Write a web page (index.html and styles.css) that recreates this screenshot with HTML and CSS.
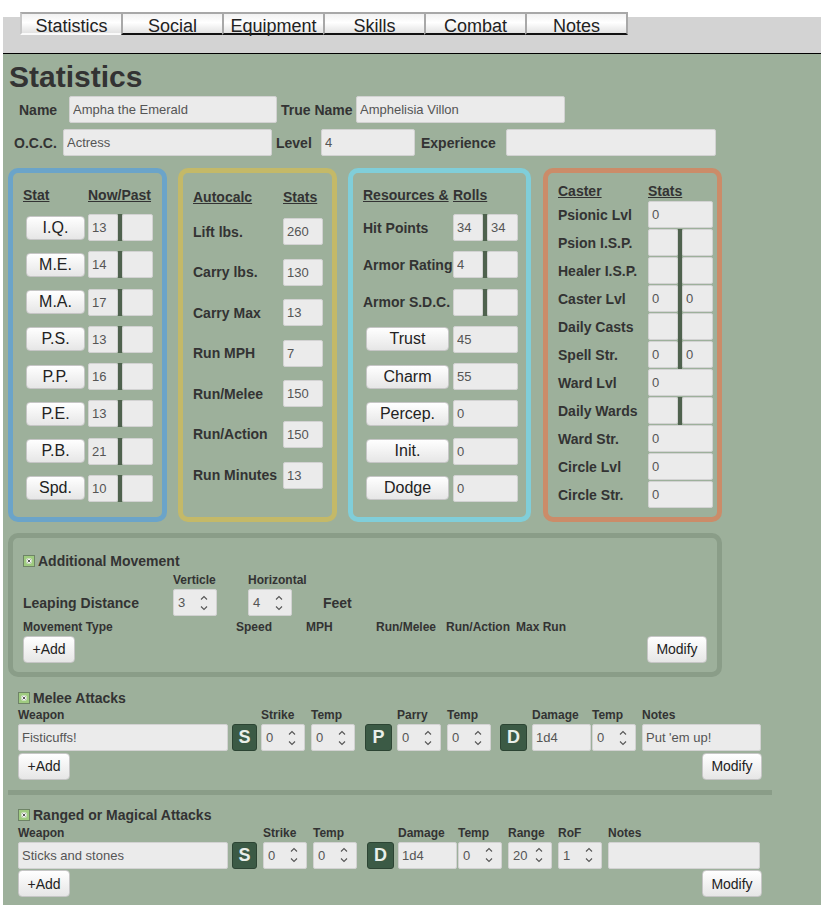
FILE: index.html
```html
<!DOCTYPE html>
<html>
<head>
<meta charset="utf-8">
<title>Statistics</title>
<link rel="stylesheet" href="styles.css">
</head>
<body>
<div class="topbar">
  <div class="tabs">
    <div class="tab active">Statistics</div>
    <div class="tab">Social</div>
    <div class="tab">Equipment</div>
    <div class="tab">Skills</div>
    <div class="tab">Combat</div>
    <div class="tab last">Notes</div>
  </div>
</div>
<div class="sheet">
  <h1>Statistics</h1>
  <div class="frow r1">
    <span class="flbl l-name">Name</span><input class="inp w208" value="Ampha the Emerald">
    <span class="flbl l-true">True Name</span><input class="inp w209" value="Amphelisia Villon">
  </div>
  <div class="frow r2">
    <span class="flbl l-occ">O.C.C.</span><input class="inp w209" value="Actress">
    <span class="flbl l-lvl">Level</span><input class="inp w94" value="4">
    <span class="flbl l-exp">Experience</span><input class="inp w210" value="">
  </div>

  <div class="boxes">
    <div class="box b-stat">
      <div class="hgrid">
        <span class="hdr">Stat</span><span class="hdr">Now/Past</span>
      </div>
      <div class="grid">
        <button class="btn sbtn">I.Q.</button><div class="pair"><input class="inp" value="13"><span class="bar"></span><input class="inp" value=""></div>
        <button class="btn sbtn">M.E.</button><div class="pair"><input class="inp" value="14"><span class="bar"></span><input class="inp" value=""></div>
        <button class="btn sbtn">M.A.</button><div class="pair"><input class="inp" value="17"><span class="bar"></span><input class="inp" value=""></div>
        <button class="btn sbtn">P.S.</button><div class="pair"><input class="inp" value="13"><span class="bar"></span><input class="inp" value=""></div>
        <button class="btn sbtn">P.P.</button><div class="pair"><input class="inp" value="16"><span class="bar"></span><input class="inp" value=""></div>
        <button class="btn sbtn">P.E.</button><div class="pair"><input class="inp" value="13"><span class="bar"></span><input class="inp" value=""></div>
        <button class="btn sbtn">P.B.</button><div class="pair"><input class="inp" value="21"><span class="bar"></span><input class="inp" value=""></div>
        <button class="btn sbtn">Spd.</button><div class="pair"><input class="inp" value="10"><span class="bar"></span><input class="inp" value=""></div>
      </div>
    </div>

    <div class="box b-auto">
      <div class="hgrid">
        <span class="hdr">Autocalc</span><span class="hdr">Stats</span>
      </div>
      <div class="grid">
        <span class="blbl">Lift lbs.</span><input class="inp" value="260">
        <span class="blbl">Carry lbs.</span><input class="inp" value="130">
        <span class="blbl">Carry Max</span><input class="inp" value="13">
        <span class="blbl">Run MPH</span><input class="inp" value="7">
        <span class="blbl">Run/Melee</span><input class="inp" value="150">
        <span class="blbl">Run/Action</span><input class="inp" value="150">
        <span class="blbl">Run Minutes</span><input class="inp" value="13">
      </div>
    </div>

    <div class="box b-res">
      <div class="hgrid">
        <span class="hdr">Resources &amp;</span><span class="hdr">Rolls</span>
      </div>
      <div class="grid">
        <span class="blbl">Hit Points</span><div class="pair"><input class="inp" value="34"><span class="bar"></span><input class="inp" value="34"></div>
        <span class="blbl">Armor Rating</span><div class="pair"><input class="inp" value="4"><span class="bar"></span><input class="inp" value=""></div>
        <span class="blbl">Armor S.D.C.</span><div class="pair"><input class="inp" value=""><span class="bar"></span><input class="inp" value=""></div>
        <button class="btn sbtn">Trust</button><input class="inp" value="45">
        <button class="btn sbtn">Charm</button><input class="inp" value="55">
        <button class="btn sbtn">Percep.</button><input class="inp" value="0">
        <button class="btn sbtn">Init.</button><input class="inp" value="0">
        <button class="btn sbtn">Dodge</button><input class="inp" value="0">
      </div>
    </div>

    <div class="box b-cast">
      <div class="hgrid">
        <span class="hdr">Caster</span><span class="hdr">Stats</span>
      </div>
      <div class="grid">
        <span class="blbl">Psionic Lvl</span><input class="inp" value="0">
        <span class="blbl">Psion I.S.P.</span><div class="pair"><input class="inp" value=""><span class="bar"></span><input class="inp" value=""></div>
        <span class="blbl">Healer I.S.P.</span><div class="pair"><input class="inp" value=""><span class="bar"></span><input class="inp" value=""></div>
        <span class="blbl">Caster Lvl</span><div class="pair"><input class="inp" value="0"><span class="bar"></span><input class="inp" value="0"></div>
        <span class="blbl">Daily Casts</span><div class="pair"><input class="inp" value=""><span class="bar"></span><input class="inp" value=""></div>
        <span class="blbl">Spell Str.</span><div class="pair"><input class="inp" value="0"><span class="bar"></span><input class="inp" value="0"></div>
        <span class="blbl">Ward Lvl</span><input class="inp" value="0">
        <span class="blbl">Daily Wards</span><div class="pair"><input class="inp" value=""><span class="bar"></span><input class="inp" value=""></div>
        <span class="blbl">Ward Str.</span><input class="inp" value="0">
        <span class="blbl">Circle Lvl</span><input class="inp" value="0">
        <span class="blbl">Circle Str.</span><input class="inp" value="0">
      </div>
    </div>
  </div>

  <div class="movebox">
    <div class="sec-title"><svg class="chk" width="12" height="12" viewBox="0 0 12 12"><rect x="0.5" y="0.5" width="11" height="11" fill="#9fcb80" stroke="#3e4a3e" stroke-dasharray="1 1"/><rect x="3.5" y="3.5" width="5" height="5" rx="0.8" fill="#f4f4f4"/><path d="M4.6 4.6l2.8 2.8M7.4 4.6l-2.8 2.8" stroke="#555" stroke-width="1"/></svg>Additional Movement</div>
    <div class="leap">
      <span></span><span class="sm">Verticle</span><span class="sm">Horizontal</span><span></span>
      <span class="blbl">Leaping Distance</span>
      <div class="inp spin w44"><span>3</span><svg class="chev" width="8" height="16" viewBox="0 0 8 16"><path d="M1 4.5L4 1.5L7 4.5M1 11.5L4 14.5L7 11.5" fill="none" stroke="#555" stroke-width="1.1"/></svg></div>
      <div class="inp spin w44"><span>4</span><svg class="chev" width="8" height="16" viewBox="0 0 8 16"><path d="M1 4.5L4 1.5L7 4.5M1 11.5L4 14.5L7 11.5" fill="none" stroke="#555" stroke-width="1.1"/></svg></div>
      <span class="blbl">Feet</span>
    </div>
    <div class="mtype">
      <span>Movement Type</span><span>Speed</span><span>MPH</span><span>Run/Melee</span><span>Run/Action</span><span>Max Run</span>
    </div>
    <div class="actions">
      <button class="btn abtn add">+Add</button><button class="btn abtn mod">Modify</button>
    </div>
  </div>

  <div class="attack melee">
    <div class="sec-title"><svg class="chk" width="12" height="12" viewBox="0 0 12 12"><rect x="0.5" y="0.5" width="11" height="11" fill="#9fcb80" stroke="#3e4a3e" stroke-dasharray="1 1"/><rect x="3.5" y="3.5" width="5" height="5" rx="0.8" fill="#f4f4f4"/><path d="M4.6 4.6l2.8 2.8M7.4 4.6l-2.8 2.8" stroke="#555" stroke-width="1"/></svg>Melee Attacks</div>
    <div class="arow">
      <div class="col"><span class="clbl">Weapon</span><input class="inp w210" value="Fisticuffs!"></div>
      <div class="col ml4"><span class="clbl"></span><button class="dbtn w25">S</button></div>
      <div class="col ml4"><span class="clbl">Strike</span><div class="inp spin w44"><span>0</span><svg class="chev" width="8" height="16" viewBox="0 0 8 16"><path d="M1 4.5L4 1.5L7 4.5M1 11.5L4 14.5L7 11.5" fill="none" stroke="#555" stroke-width="1.1"/></svg></div></div>
      <div class="col ml6"><span class="clbl">Temp</span><div class="inp spin w44"><span>0</span><svg class="chev" width="8" height="16" viewBox="0 0 8 16"><path d="M1 4.5L4 1.5L7 4.5M1 11.5L4 14.5L7 11.5" fill="none" stroke="#555" stroke-width="1.1"/></svg></div></div>
      <div class="col ml10"><span class="clbl"></span><button class="dbtn w27">P</button></div>
      <div class="col ml5"><span class="clbl">Parry</span><div class="inp spin w44"><span>0</span><svg class="chev" width="8" height="16" viewBox="0 0 8 16"><path d="M1 4.5L4 1.5L7 4.5M1 11.5L4 14.5L7 11.5" fill="none" stroke="#555" stroke-width="1.1"/></svg></div></div>
      <div class="col ml6"><span class="clbl">Temp</span><div class="inp spin w44"><span>0</span><svg class="chev" width="8" height="16" viewBox="0 0 8 16"><path d="M1 4.5L4 1.5L7 4.5M1 11.5L4 14.5L7 11.5" fill="none" stroke="#555" stroke-width="1.1"/></svg></div></div>
      <div class="col ml9"><span class="clbl"></span><button class="dbtn w27">D</button></div>
      <div class="col ml5"><span class="clbl">Damage</span><input class="inp w59" value="1d4"></div>
      <div class="col ml1"><span class="clbl">Temp</span><div class="inp spin w44"><span>0</span><svg class="chev" width="8" height="16" viewBox="0 0 8 16"><path d="M1 4.5L4 1.5L7 4.5M1 11.5L4 14.5L7 11.5" fill="none" stroke="#555" stroke-width="1.1"/></svg></div></div>
      <div class="col ml6"><span class="clbl">Notes</span><input class="inp w119" value="Put 'em up!"></div>
    </div>
    <div class="actions wide">
      <button class="btn abtn add">+Add</button><button class="btn abtn mod">Modify</button>
    </div>
  </div>

  <div class="sep"></div>

  <div class="attack ranged">
    <div class="sec-title"><svg class="chk" width="12" height="12" viewBox="0 0 12 12"><rect x="0.5" y="0.5" width="11" height="11" fill="#9fcb80" stroke="#3e4a3e" stroke-dasharray="1 1"/><rect x="3.5" y="3.5" width="5" height="5" rx="0.8" fill="#f4f4f4"/><path d="M4.6 4.6l2.8 2.8M7.4 4.6l-2.8 2.8" stroke="#555" stroke-width="1"/></svg>Ranged or Magical Attacks</div>
    <div class="arow">
      <div class="col"><span class="clbl">Weapon</span><input class="inp w210" value="Sticks and stones"></div>
      <div class="col ml4"><span class="clbl"></span><button class="dbtn w25">S</button></div>
      <div class="col ml6"><span class="clbl">Strike</span><div class="inp spin w44"><span>0</span><svg class="chev" width="8" height="16" viewBox="0 0 8 16"><path d="M1 4.5L4 1.5L7 4.5M1 11.5L4 14.5L7 11.5" fill="none" stroke="#555" stroke-width="1.1"/></svg></div></div>
      <div class="col ml6"><span class="clbl">Temp</span><div class="inp spin w44"><span>0</span><svg class="chev" width="8" height="16" viewBox="0 0 8 16"><path d="M1 4.5L4 1.5L7 4.5M1 11.5L4 14.5L7 11.5" fill="none" stroke="#555" stroke-width="1.1"/></svg></div></div>
      <div class="col ml10"><span class="clbl"></span><button class="dbtn w27">D</button></div>
      <div class="col ml4"><span class="clbl">Damage</span><input class="inp w59" value="1d4"></div>
      <div class="col ml1"><span class="clbl">Temp</span><div class="inp spin w44"><span>0</span><svg class="chev" width="8" height="16" viewBox="0 0 8 16"><path d="M1 4.5L4 1.5L7 4.5M1 11.5L4 14.5L7 11.5" fill="none" stroke="#555" stroke-width="1.1"/></svg></div></div>
      <div class="col ml6"><span class="clbl">Range</span><div class="inp spin w44"><span>20</span><svg class="chev" width="8" height="16" viewBox="0 0 8 16"><path d="M1 4.5L4 1.5L7 4.5M1 11.5L4 14.5L7 11.5" fill="none" stroke="#555" stroke-width="1.1"/></svg></div></div>
      <div class="col ml6"><span class="clbl">RoF</span><div class="inp spin w44"><span>1</span><svg class="chev" width="8" height="16" viewBox="0 0 8 16"><path d="M1 4.5L4 1.5L7 4.5M1 11.5L4 14.5L7 11.5" fill="none" stroke="#555" stroke-width="1.1"/></svg></div></div>
      <div class="col ml6"><span class="clbl">Notes</span><input class="inp w152" value=""></div>
    </div>
    <div class="actions wide">
      <button class="btn abtn add">+Add</button><button class="btn abtn mod">Modify</button>
    </div>
  </div>
</div>
</body>
</html>
```

FILE: styles.css
```css
* { box-sizing: border-box; }
html, body { margin: 0; padding: 0; }
body {
  font-family: "Liberation Sans", Arial, sans-serif;
  color: #333;
  background: #fff;
  overflow: hidden;
}

/* ---------- tabs ---------- */
.topbar {
  display: flow-root;
  margin: 17px 0 0 3px;
  height: 37px;
  background: #d3d3d3;
  border-bottom: 1px solid #000;
}
.tabs {
  display: flex;
  margin: -5px 0 0 17px;
}
.tab {
  width: 101px;
  height: 23px;
  padding-top: 2px;
  border-top: 2px solid #a8a8a8;
  border-left: 2px solid #a8a8a8;
  border-bottom: 2px solid #111;
  background: linear-gradient(#f2f2f2, #ffffff 45%, #e2e2e2);
  font-size: 18px;
  line-height: 20px;
  text-align: center;
  color: #222;
}
.tab.active {
  border-bottom-color: #fafafa;
  border-left-color: #c8c8c8;
}
.tab.last {
  width: 103px;
  border-right: 2px solid #a8a8a8;
}

/* ---------- sheet ---------- */
.sheet {
  margin-left: 3px;
  padding-top: 6px;
  min-height: 851px;
  background: #9db09b;
  display: flow-root;
}
h1 {
  margin: 0 0 0 6px;
  font-size: 30px;
  line-height: 34px;
  font-weight: bold;
  color: #333;
}

.inp {
  display: block;
  height: 27px;
  margin: 0;
  padding: 0 3px;
  border: 1px solid #d2d2d2;
  border-radius: 2px;
  background: #ebebeb;
  font-family: "Liberation Sans", Arial, sans-serif;
  font-size: 13px;
  color: #555;
  outline: none;
}

.frow {
  display: flex;
  align-items: center;
  height: 27px;
}
.r1 { margin-top: 2px; }
.r2 { margin-top: 6px; }
.flbl {
  font-size: 14px;
  font-weight: bold;
  white-space: nowrap;
  color: #333;
}
.l-name { margin-left: 16px; width: 50px; }
.l-true { margin-left: 4px; width: 75px; }
.l-occ { margin-left: 11px; width: 49px; }
.l-lvl { margin-left: 4px; width: 45px; }
.l-exp { margin-left: 6px; width: 85px; }
.w208 { width: 208px; }
.w209 { width: 209px; }
.w210 { width: 210px; }
.w94 { width: 94px; }
.w59 { width: 59px; }
.w119 { width: 119px; }
.w152 { width: 152px; }
.w44 { width: 44px; }
.w25 { width: 25px; }
.w27 { width: 27px; }

/* ---------- boxes ---------- */
.boxes {
  display: flex;
  margin: 12px 0 0 5px;
  height: 354px;
}
.box {
  border: 5px solid;
  border-radius: 10px;
  padding-left: 10px;
}
.b-stat { width: 159px; border-color: #6ba4c9; padding-top: 14px; }
.b-auto { width: 159px; margin-left: 11px; border-color: #c4b968; padding-top: 16px; }
.b-res { width: 183px; margin-left: 11px; border-color: #80ced9; padding-top: 14px; }
.b-cast { width: 179px; margin-left: 12px; border-color: #cb8c69; padding-top: 10px; }

.hgrid, .grid {
  display: grid;
  align-items: center;
}
.hgrid { height: 16px; }
.hdr {
  font-size: 14px;
  line-height: 16px;
  font-weight: bold;
  text-decoration: underline;
  white-space: nowrap;
  color: #333;
}
.grid { grid-auto-rows: 27px; }

.b-stat .hgrid, .b-stat .grid { grid-template-columns: 65px 65px; }
.b-stat .hgrid { margin-bottom: 11px; }
.b-stat .grid { row-gap: 10.29px; }

.b-auto .hgrid, .b-auto .grid { grid-template-columns: 90px 40px; }
.b-auto .hgrid { margin-bottom: 13px; }
.b-auto .grid { row-gap: 13.6px; }
.b-auto .inp { width: 40px; }

.b-res .hgrid, .b-res .grid { grid-template-columns: 90px 65px; }
.b-res .hgrid { margin-bottom: 11px; }
.b-res .grid { row-gap: 10.29px; }
.b-res .grid > .inp { width: 65px; }

.b-cast .hgrid, .b-cast .grid { grid-template-columns: 90px 65px; }
.b-cast .hgrid { margin-bottom: 2px; }
.b-cast .grid { row-gap: 1px; }
.b-cast .grid > .inp { width: 65px; }
.b-cast .bar { height: 28px; align-self: flex-start; }

.blbl {
  font-size: 14px;
  font-weight: bold;
  white-space: nowrap;
  color: #333;
}

.pair {
  display: flex;
  height: 27px;
}
.pair .inp { width: 30px; }
.pair .inp + .bar + .inp { width: 31px; }
.bar {
  width: 4px;
  background: #4f624e;
}

.btn {
  margin: 0;
  padding: 0;
  border: 1px solid #c6c6c6;
  border-radius: 4px;
  background: linear-gradient(#ffffff, #e6e6e6);
  font-family: "Liberation Sans", Arial, sans-serif;
  color: #222;
  cursor: pointer;
}
.sbtn {
  height: 24px;
  margin-left: 3px;
  font-size: 16px;
}
.b-stat .sbtn { width: 59px; }
.b-res .sbtn { width: 83px; }

/* ---------- additional movement ---------- */
.movebox {
  margin: 11px 0 0 5px;
  width: 714px;
  height: 144px;
  border: 5px solid #8a9d88;
  border-radius: 10px;
  padding: 14px 10px 0 10px;
}
.sec-title {
  display: flex;
  align-items: center;
  height: 17px;
  font-size: 14px;
  font-weight: bold;
  color: #333;
  white-space: nowrap;
}
.chk { margin-right: 3px; flex: none; }
.leap {
  display: grid;
  grid-template-columns: 150px 75px 75px auto;
  grid-template-rows: 14px 27px;
  row-gap: 2px;
  align-items: center;
  margin-top: 4px;
}
.sm {
  font-size: 12px;
  line-height: 14px;
  font-weight: bold;
  color: #333;
}
.mtype {
  display: grid;
  grid-template-columns: 213px 70px 70px 70px 70px auto;
  margin-top: 3.5px;
  font-size: 12px;
  line-height: 14px;
  font-weight: bold;
  color: #333;
  white-space: nowrap;
}
.actions {
  display: flex;
  justify-content: space-between;
  margin-top: 2px;
}
.abtn {
  height: 27px;
  font-size: 14px;
}
.add { width: 52px; }
.mod { width: 60px; }

.spin {
  display: flex;
  align-items: center;
  padding: 0 0 0 4px;
  font-size: 13px;
}
.chev { margin-left: auto; margin-right: 8px; flex: none; }

/* ---------- attacks ---------- */
.attack { margin-left: 15px; }
.melee { margin-top: 12.3px; }
.ranged { margin-top: 11.7px; }
.arow { display: flex; }
.col {
  display: flex;
  flex-direction: column;
}
.clbl {
  height: 18px;
  line-height: 18px;
  font-size: 12px;
  font-weight: bold;
  color: #333;
  white-space: nowrap;
}
.ml1 { margin-left: 1px; }
.ml4 { margin-left: 4px; }
.ml5 { margin-left: 5px; }
.ml6 { margin-left: 6px; }
.ml9 { margin-left: 9px; }
.ml10 { margin-left: 10px; }
.dbtn {
  height: 27px;
  margin: 0;
  padding: 0;
  border: 1px solid #2c4433;
  border-radius: 3px;
  background: #3b5a45;
  color: #e9efe9;
  font-family: "Liberation Sans", Arial, sans-serif;
  font-size: 18px;
  font-weight: bold;
}
.actions.wide {
  width: 744px;
  margin-top: 1.5px;
}
.sep {
  margin: 10.5px 0 0 5px;
  width: 764px;
  height: 5px;
  background: #8a9d88;
}
```
